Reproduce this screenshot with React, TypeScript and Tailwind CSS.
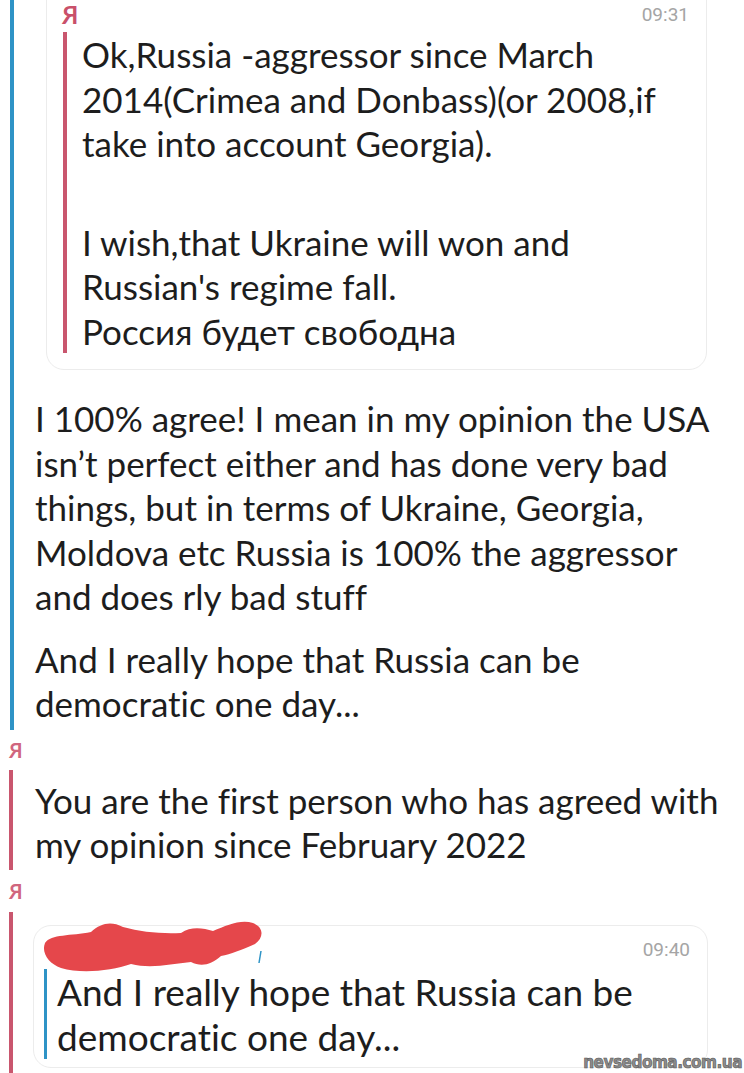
const body = "font-['Lato','Noto_Sans',sans-serif] [font-variant-ligatures:none]";

function Lines({ lines }: { lines: string[] }) {
  return (
    <>
      {lines.map((l) => (
        <div key={l} className="whitespace-nowrap">
          {l}
        </div>
      ))}
    </>
  );
}

function Scribble() {
  return (
    <svg
      className="absolute left-[7px] top-[-7px]"
      width="224"
      height="56"
      viewBox="0 0 224 56"
    >
      <path
        fill="#e5474b"
        d="M4,24 C10,15 30,17 50,13 C60,4 70,2 82,8 C100,13 120,15 140,14 C150,7 162,9 172,12 C186,6 200,0 212,4 C223,8 223,19 214,25 C200,31 190,35 180,37 C170,46 160,48 150,43 C130,45 110,50 90,45 C70,52 40,55 20,49 C8,45 0,34 4,24 Z"
      />
      <path d="M220,32 L218,44" stroke="#2e93c6" strokeWidth="1.5" />
    </svg>
  );
}

export default function App() {
  return (
    <div
      className={`relative w-[744px] h-[1073px] overflow-hidden bg-white text-[#1d1d1d] ${body}`}
    >
      {/* incoming message with quoted reply */}
      <div className="flex pl-[10px]">
        <div className="w-[4px] bg-[#2e93c6]" />
        <div className="flex-1 pl-[21px] pb-[4px]">
          <div className="ml-[11px] w-[661px] -mt-[24px] pt-[24px] pb-[16px] rounded-b-[18px] border border-[#ececec]">
            <div className="flex h-[28px] items-center justify-between pl-[15px] pr-[17px]">
              <span className="text-[24px] font-bold text-[#c9506a] leading-none">
                Я
              </span>
              <span className="font-['Roboto',sans-serif] text-[19px] text-[#a5a5a5]">
                09:31
              </span>
            </div>
            <div className="mt-[3px] ml-[16px] flex">
              <div className="w-[4px] bg-[#c9566e]" />
              <div className="pl-[15px] text-[35px] leading-[44.5px]">
                <Lines
                  lines={[
                    "Ok,Russia -aggressor since March",
                    "2014(Crimea and Donbass)(or 2008,if",
                    "take into account Georgia).",
                  ]}
                />
                <div className="h-[54px]" />
                <Lines
                  lines={[
                    "I wish,that Ukraine will won and",
                    "Russian's regime fall.",
                    "Россия будет свободна",
                  ]}
                />
              </div>
            </div>
          </div>
          <div className="mt-[26px] text-[35px] leading-[44.5px]">
            <Lines
              lines={[
                "I 100% agree! I mean in my opinion the USA",
                "isn’t perfect either and has done very bad",
                "things, but in terms of Ukraine, Georgia,",
                "Moldova etc Russia is 100% the aggressor",
                "and does rly bad stuff",
              ]}
            />
            <div className="mt-[18px]">
              <Lines
                lines={[
                  "And I really hope that Russia can be",
                  "democratic one day...",
                ]}
              />
            </div>
          </div>
        </div>
      </div>

      {/* my reply */}
      <div className="flex h-[40px] items-center pl-[9px]">
        <span className="text-[20px] font-bold text-[#d0667e] leading-none">Я</span>
      </div>
      <div className="flex pl-[9px]">
        <div className="w-[4px] bg-[#c9566e]" />
        <div className="pl-[22px] pt-[8px] pb-[3px] text-[35px] leading-[44.5px]">
          <Lines
            lines={[
              "You are the first person who has agreed with",
              "my opinion since February 2022",
            ]}
          />
        </div>
      </div>

      {/* my forwarded quote */}
      <div className="flex h-[42px] items-center pl-[9px]">
        <span className="text-[20px] font-bold text-[#d0667e] leading-none">Я</span>
      </div>
      <div className="flex h-[200px] pl-[9px]">
        <div className="w-[4px] bg-[#c9566e]" />
        <div className="pl-[20px] pt-[13px]">
          <div className="relative w-[675px] rounded-[18px] border border-[#ececec] pt-[13px] pb-[8px]">
            <Scribble />
            <div className="flex h-[24px] items-center justify-end pr-[17px]">
              <span className="font-['Roboto',sans-serif] text-[19px] text-[#a5a5a5]">
                09:40
              </span>
            </div>
            <div className="mt-[6px] ml-[10px] flex">
              <div className="w-[3px] bg-[#2e93c6]" />
              <div className="pl-[10px] text-[37px] leading-[45px]">
                <Lines
                  lines={[
                    "And I really hope that Russia can be",
                    "democratic one day...",
                  ]}
                />
              </div>
            </div>
          </div>
        </div>
      </div>

      <div className="absolute right-[2px] bottom-[2px] font-['DejaVu_Sans_Condensed','DejaVu_Sans',sans-serif] font-bold text-[17px] leading-none tracking-[-0.5px] text-[#8c8c8c] [-webkit-text-stroke:0.6px_#555] [text-shadow:0_0_2px_#fff]">
        nevsedoma.com.ua
      </div>
    </div>
  );
}
